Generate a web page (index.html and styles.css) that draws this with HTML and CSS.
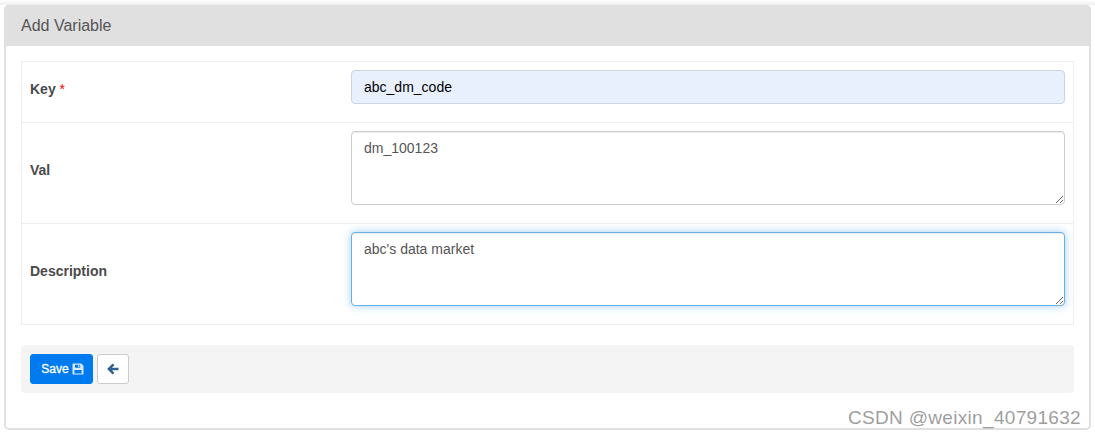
FILE: index.html
```html
<!DOCTYPE html>
<html lang="en">
<head>
<meta charset="utf-8">
<title>Add Variable</title>
<link rel="stylesheet" href="styles.css">
</head>
<body>
<div class="topfade"></div>
<section class="panel">
  <header class="panel-head">Add Variable</header>
  <div class="panel-body">
    <form>
      <div class="fields">
        <div class="row">
          <label class="lbl">Key <span class="req">*</span></label>
          <div class="ctl"><input class="inp inp-auto" type="text" value="abc_dm_code"></div>
        </div>
        <div class="row">
          <label class="lbl">Val</label>
          <div class="ctl"><textarea class="inp area">dm_100123</textarea></div>
        </div>
        <div class="row">
          <label class="lbl">Description</label>
          <div class="ctl"><textarea class="inp area area-focus">abc's data market</textarea></div>
        </div>
      </div>
      <div class="actions">
        <button type="button" class="btn btn-save"><span class="save-txt">Save</span>
          <svg class="ico" viewBox="0 0 12 12" width="12" height="12"><path fill="#dbe9fb" fill-rule="evenodd" d="M1 0.5h8.3L11.5 2.7V10.5a1 1 0 0 1-1 1H1.5a1 1 0 0 1-1-1V1.5a1 1 0 0 1 .5-1zM3 1.7v3h5.2v-3zM2.4 7v3.4h7.2V7z"/><rect x="6.2" y="2.1" width="1.2" height="2.1" fill="#dbe9fb"/></svg>
        </button>
        <button type="button" class="btn btn-back" aria-label="Back">
          <svg viewBox="0 0 12 12" width="12" height="12"><path fill="none" stroke="#31608f" stroke-width="2.5" d="M6.5 1.4 1.9 6l4.6 4.6M2.4 6H11.5"/></svg>
        </button>
      </div>
    </form>
  </div>
</section>
<div class="mark">CSDN @weixin_40791632</div>
</body>
</html>
```

FILE: styles.css
```css
* { box-sizing: border-box; }
html, body { margin: 0; height: 437px; overflow: hidden; background: #fff; }
body {
  position: relative;
  padding: 5px 4px 0 4px;
  font-family: "Liberation Sans", Arial, sans-serif;
  font-size: 14px;
  color: #555;
}
.topfade {
  position: absolute; left: 0; right: 0; top: 0; height: 5px;
  background: linear-gradient(#ffffff, #efefef);
}
.panel {
  position: relative;
  width: 1087px;
  height: 425px;
  border: 2px solid #e0e0e0;
  border-top: 0;
  border-radius: 5px;
  background: #fff;
}
.panel-head {
  height: 41px;
  margin: 0 -2px;
  padding: 0 17px;
  line-height: 41px;
  background: #e0e0e0;
  border-radius: 5px 5px 0 0;
  font-size: 16px;
  color: #555;
}
.panel-body { padding: 15px 15px 0 15px; }
.fields { border: 1px solid #eee; width: 1053px; }
.row {
  display: grid;
  grid-template-columns: 329px 714px;
  align-items: center;
  padding: 8px 0 18px 0;
  border-bottom: 1px solid #eee;
}
.row:last-child { border-bottom: 0; padding-bottom: 18px; }
.lbl { padding: 3px 0 0 8px; font-weight: 700; font-size: 14px; color: #4a4a4a; }
.req { color: #f00; font-weight: 400; }
.inp {
  display: block;
  width: 714px;
  border: 1px solid #ccc;
  border-radius: 4px;
  padding: 6px 12px;
  font-family: "Liberation Sans", Arial, sans-serif;
  font-size: 14px;
  line-height: 20px;
  color: #555;
  background: #fff;
  outline: none;
}
.inp-auto {
  height: 34px;
  background: #e8f0fe;
  border-color: #cdd3e0;
  color: #000;
}
.area { height: 74px; resize: vertical; box-shadow: inset 0 1px 1px rgba(0,0,0,.075); }
.area-focus {
  border-color: #66afe9;
  box-shadow: inset 0 1px 1px rgba(0,0,0,.075), 0 0 8px rgba(102,175,233,.6);
}
.actions {
  display: flex;
  align-items: center;
  gap: 4px;
  width: 1053px;
  height: 48px;
  margin-top: 20px;
  padding: 0 9px;
  background: #f4f4f4;
  border-radius: 4px;
}
.btn {
  display: inline-flex;
  align-items: center;
  justify-content: center;
  height: 30px;
  border-radius: 3px;
  font-family: "Liberation Sans", Arial, sans-serif;
  font-size: 12px;
  padding: 0;
  cursor: pointer;
}
.btn-save {
  width: 63px;
  gap: 3px;
  padding-left: 2px;
  background: #007bef;
  border: 1px solid #007bef;
  color: #fff;
}
.save-txt { -webkit-text-stroke: 0.3px #fff; }
.btn-back {
  width: 32px;
  background: #fff;
  border: 1px solid #ccc;
}
.mark {
  position: absolute;
  right: 14px;
  top: 408px;
  font-family: "Liberation Sans", sans-serif;
  font-size: 19px;
  letter-spacing: .32px;
  line-height: 20px;
  color: rgba(140,140,140,.85);
  white-space: nowrap;
}
```
